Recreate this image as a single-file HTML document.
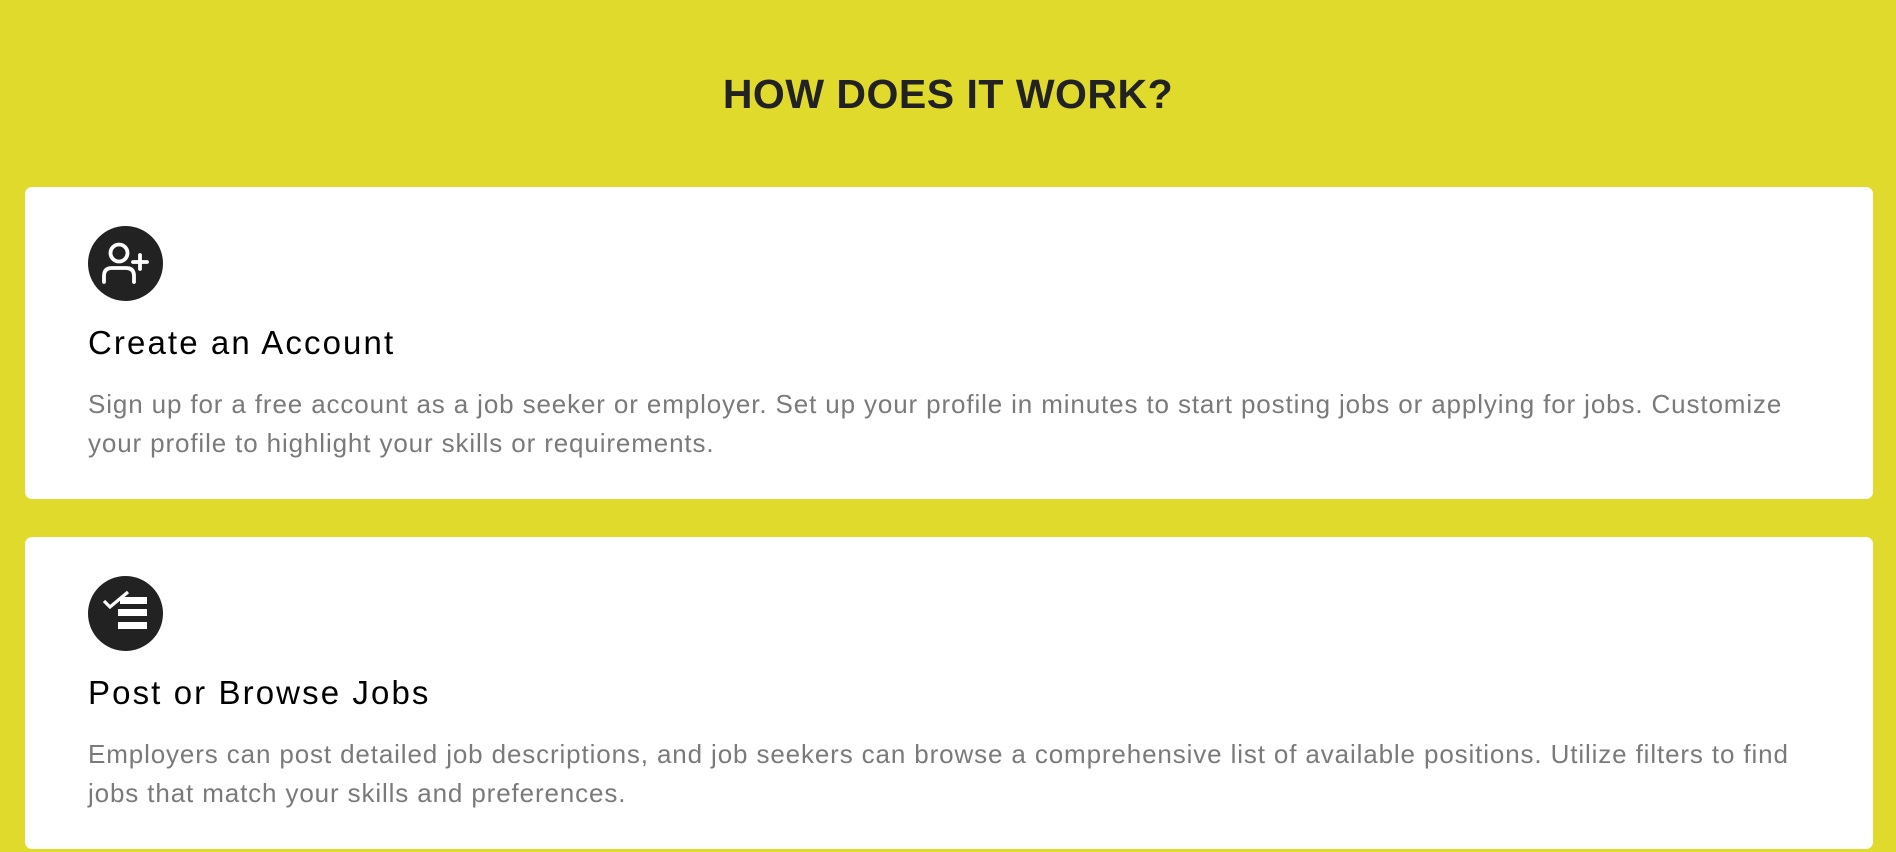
<!DOCTYPE html>
<html><head><meta charset="utf-8"><style>
*{margin:0;padding:0;box-sizing:border-box}
html,body{width:1896px;height:852px;overflow:hidden;background:#e0da2d;font-family:"Liberation Sans",sans-serif}
h1{position:absolute;top:71px;left:0;width:1896px;text-align:center;font-size:41px;font-weight:bold;color:#222;letter-spacing:0.5px}
.card{position:absolute;left:25px;width:1848px;height:312px;background:#fff;border-radius:7px}
.icon{position:absolute;left:63px;top:39px;width:75px;height:75px;border-radius:50%;background:#222}
.icon svg{position:absolute;left:0;top:0}
h2{position:absolute;left:63px;top:137px;font-size:33px;font-weight:normal;color:#000;letter-spacing:2.1px}
p{position:absolute;left:63px;top:198px;font-size:26px;line-height:39px;color:#7a7a7a;white-space:nowrap;letter-spacing:0.87px}
</style></head><body>
<h1>HOW DOES IT WORK?</h1>
<div class="card" style="top:187px">
 <div class="icon"><svg width="75" height="75" viewBox="0 0 75 75" fill="none" stroke="#fff" stroke-width="3.8" stroke-linecap="round">
  <circle cx="31" cy="27" r="8.5"/>
  <path d="M16 56 V50 Q16 42 24 42 H38 Q46 42 46 50 V56"/>
  <path d="M45 36 H59 M52 29 V43"/>
 </svg></div>
 <h2>Create an Account</h2>
 <p>Sign up for a free account as a job seeker or employer. Set up your profile in minutes to start posting jobs or applying for jobs. Customize<br>your profile to highlight your skills or requirements.</p>
</div>
<div class="card" style="top:537px">
 <div class="icon"><svg width="75" height="75" viewBox="0 0 75 75">
  <path d="M16 25 L22 31 L40 16" fill="none" stroke="#fff" stroke-width="3.2"/>
  <rect x="32" y="21" width="27" height="7" fill="#fff"/>
  <rect x="30" y="33" width="29" height="7" fill="#fff"/>
  <rect x="30" y="46" width="29" height="7" fill="#fff"/>
 </svg></div>
 <h2>Post or Browse Jobs</h2>
 <p>Employers can post detailed job descriptions, and job seekers can browse a comprehensive list of available positions. Utilize filters to find<br>jobs that match your skills and preferences.</p>
</div>
</body></html>
